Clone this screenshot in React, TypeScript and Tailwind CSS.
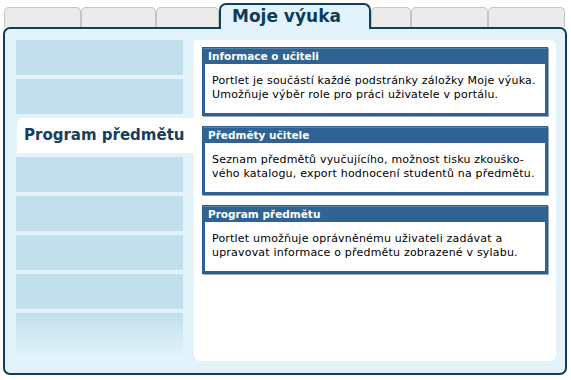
import React from 'react'

const font = { fontFamily: '"DejaVu Sans", Verdana, sans-serif' }

interface PortletProps {
  title: string
  lines: string[]
}

function Portlet({ title, lines }: PortletProps) {
  return (
    <div className="border border-[#2c5e8d] shadow-[1px_1px_0_#9aa9b5]">
      <div className="h-[16px] bg-[#2e6394] border-t border-[#5a83a9] pl-[5px] text-[10.5px] leading-[14px] font-bold text-white">
        {title}
      </div>
      <div className="bg-white border-2 border-t-0 border-[#2e6294] pl-[7px] pt-[10px] pb-[11px] text-[11px] leading-[14px] tracking-[0.2px] text-black">
        {lines.map(l => (
          <div key={l}>{l}</div>
        ))}
      </div>
    </div>
  )
}

function Tab({ w }: { w: string }) {
  return <div className={`${w} h-[20px] bg-[#ebebeb] border border-b-0 border-[#c4c4c4] rounded-t-[5px]`} />
}

export default function App() {
  return (
    <div className="w-[571px] h-[380px] bg-white pt-[3px]" style={font}>
      {/* záložky */}
      <div className="flex items-end h-[24px] pl-[4px]">
        <Tab w="w-[77px]" />
        <Tab w="w-[75px]" />
        <Tab w="w-[63px]" />
        <div className="relative z-10 w-[152px] h-[26px] -mb-[2px] bg-[#e3f3fb] border-2 border-b-0 border-[#0f3e5e] rounded-t-[7px] pl-[11px] pt-[1px] text-[17px] leading-[20px] font-bold text-[#0d3b5a]">
          Moje výuka
        </div>
        <Tab w="w-[40px]" />
        <Tab w="w-[77px]" />
        <Tab w="w-[77px]" />
      </div>

      {/* hlavní panel */}
      <div className="ml-[3px] w-[564px] h-[348px] bg-[#e3f3fb] border-2 border-[#0f3e5e] rounded-[7px] flex pt-[11px] pl-[11px] pr-[9px] pb-[12px]">
        <div className="w-[167px] flex flex-col gap-[4px]">
          <div className="h-[35px] bg-[#c1e0ec]" />
          <div className="h-[35px] bg-[#c1e0ec]" />
          <div className="h-[35px] -mr-[11px] ml-[1px] bg-white rounded-tl-[6px] pl-[7px] flex items-center text-[15px] font-bold text-[#163e5e]">
            Program předmětu
          </div>
          <div className="h-[35px] bg-[#c1e0ec]" />
          <div className="h-[35px] bg-[#c1e0ec]" />
          <div className="h-[35px] bg-[#c1e0ec]" />
          <div className="h-[35px] bg-[#c1e0ec]" />
          <div className="h-[46px] bg-gradient-to-b from-[#c1e0ec] to-[#e3f3fb]" />
        </div>
        <div className="flex-1 ml-[11px] bg-white rounded-[6px] rounded-tl-none pt-[7px] px-[8px] flex flex-col gap-[10px]">
          <Portlet
            title="Informace o učiteli"
            lines={[
              'Portlet je součástí každé podstránky záložky Moje výuka.',
              'Umožňuje výběr role pro práci uživatele v portálu.',
            ]}
          />
          <Portlet
            title="Předměty učitele"
            lines={[
              'Seznam předmětů vyučujícího, možnost tisku zkouško-',
              'vého katalogu, export hodnocení studentů na předmětu.',
            ]}
          />
          <Portlet
            title="Program předmětu"
            lines={[
              'Portlet umožňuje oprávněnému uživateli zadávat a',
              'upravovat informace o předmětu zobrazené v sylabu.',
            ]}
          />
        </div>
      </div>
    </div>
  )
}
